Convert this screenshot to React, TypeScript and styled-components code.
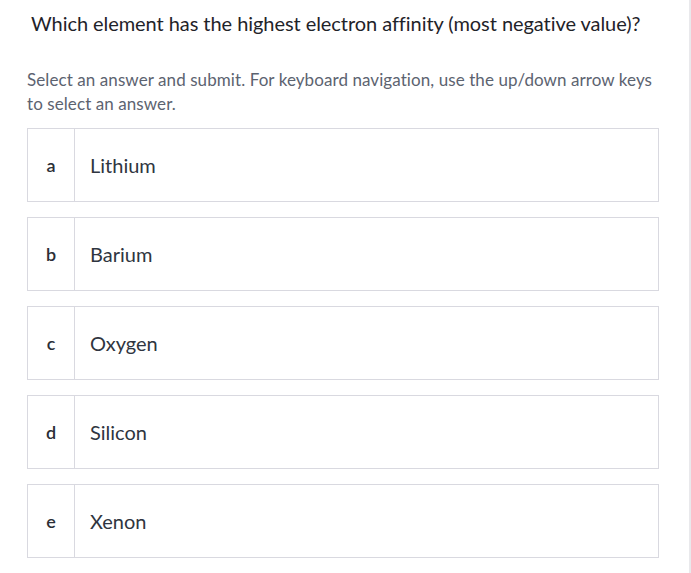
import React, { useState } from "react";
import styled, { createGlobalStyle } from "styled-components";

const GlobalStyle = createGlobalStyle`
  html, body {
    margin: 0;
    padding: 0;
    background: #ffffff;
  }
  body {
    font-family: "Lato", "Open Sans", sans-serif;
  }
`;

const answers = [
  { key: "a", label: "Lithium" },
  { key: "b", label: "Barium" },
  { key: "c", label: "Oxygen" },
  { key: "d", label: "Silicon" },
  { key: "e", label: "Xenon" },
];

const App: React.FC = () => {
  const [selected, setSelected] = useState<string | null>(null);

  return (
    <>
      <GlobalStyle />
      <Page>
        <Question>Which element has the highest electron affinity (most negative value)?</Question>
        <Instructions>
          Select an answer and submit. For keyboard navigation, use the up/down arrow keys to select an answer.
        </Instructions>
        <AnswerList role="radiogroup">
          {answers.map((a) => (
            <AnswerRow
              key={a.key}
              role="radio"
              aria-checked={selected === a.key}
              $active={selected === a.key}
              onClick={() => setSelected(a.key)}
            >
              <Letter>{a.key}</Letter>
              <Label>{a.label}</Label>
            </AnswerRow>
          ))}
        </AnswerList>
      </Page>
    </>
  );
};

export default App;

const Page = styled.div`
  box-sizing: border-box;
  width: 691px;
  min-height: 573px;
  padding: 9px 30px 0 27px;
  border-right: 2px solid #e9e9ec;
`;

const Question = styled.h1`
  margin: 0 0 0 4px;
  font-size: 20px;
  letter-spacing: -0.06px;
  font-weight: 400;
  line-height: 28px;
  color: #1f2329;
  white-space: nowrap;
`;

const Instructions = styled.p`
  margin: 31px 0 0;
  font-size: 17px;
  letter-spacing: 0.08px;
  line-height: 24px;
  color: #5c6370;
`;

const AnswerList = styled.div`
  display: flex;
  flex-direction: column;
  gap: 15px;
  margin-top: 12px;
`;

const AnswerRow = styled.div<{ $active: boolean }>`
  display: flex;
  align-items: stretch;
  height: 74px;
  box-sizing: border-box;
  border: 1px solid ${(p) => (p.$active ? "#4a6fd1" : "#d9d9e0")};
  background: #ffffff;
  cursor: pointer;
`;

const Letter = styled.div`
  display: flex;
  align-items: center;
  justify-content: center;
  width: 46px;
  border-right: 1px solid #d9d9e0;
  font-size: 18px;
  font-weight: 600;
  color: #2b2f36;
`;

const Label = styled.div`
  display: flex;
  align-items: center;
  padding-left: 15px;
  font-size: 20px;
  color: #2f3540;
`;
